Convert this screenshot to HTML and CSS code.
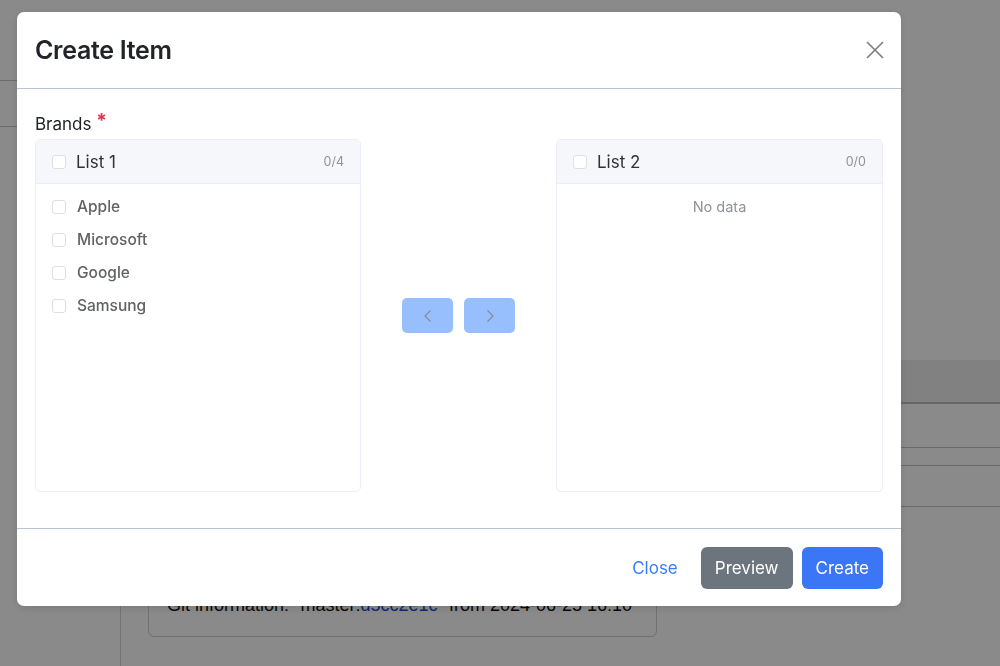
FILE: index.html
```html
<!DOCTYPE html>
<html lang="en">
<head>
  <meta charset="UTF-8" />
  <meta name="viewport" content="width=device-width, initial-scale=1.0"/>
  <title>Items – Create</title>
  <link rel="stylesheet" href="styles.css">
</head>
<body>

<div class="layout">
  <aside class="sidebar">
    <div class="sidebar-brand"></div>
    <div class="sidebar-item"></div>
    <nav class="sidebar-nav"></nav>
  </aside>

  <main class="content">
    <table class="data-table">
      <thead>
        <tr><th>&nbsp;</th></tr>
      </thead>
      <tbody>
        <tr class="row-a"><td>&nbsp;</td></tr>
        <tr class="row-b"><td></td></tr>
        <tr class="row-c"><td>&nbsp;</td></tr>
      </tbody>
    </table>

    <div class="git-info">
      Git information: "master:<a href="#">d5cc2e1c</a>" from 2024-06-25 16:10
    </div>
  </main>
</div>

<!-- Create item dialog -->
<div class="modal-backdrop">
  <div class="modal-dialog">
    <div class="modal-header">
      <h4 class="modal-title">Create Item</h4>
      <button class="btn-close" aria-label="Close">
        <svg width="18" height="18" viewBox="0 0 18 18">
          <path d="M1 1 L17 17 M17 1 L1 17" stroke="#7f7f7f" stroke-width="1.7" fill="none"/>
        </svg>
      </button>
    </div>

    <div class="modal-body">
      <label class="form-label">Brands <span class="required">*</span></label>

      <div class="transfer">
        <div class="transfer-panel">
          <div class="panel-header">
            <span class="checkbox"></span>
            <span class="panel-title">List 1</span>
            <span class="panel-count">0/4</span>
          </div>
          <div class="panel-list" id="sourceList">
            <!-- items added by script -->
          </div>
        </div>

        <div class="transfer-buttons">
          <button class="arrow-btn" disabled>
            <svg width="8" height="12" viewBox="0 0 8 12"><path d="M6.5 0.5 L1 6 L6.5 11.5" stroke="#858c97" stroke-width="1.2" fill="none"/></svg>
          </button>
          <button class="arrow-btn" disabled>
            <svg width="8" height="12" viewBox="0 0 8 12"><path d="M1.5 0.5 L7 6 L1.5 11.5" stroke="#858c97" stroke-width="1.2" fill="none"/></svg>
          </button>
        </div>

        <div class="transfer-panel">
          <div class="panel-header">
            <span class="checkbox"></span>
            <span class="panel-title">List 2</span>
            <span class="panel-count">0/0</span>
          </div>
          <div class="panel-list">
            <p class="panel-empty">No data</p>
          </div>
        </div>
      </div>
    </div>

    <div class="modal-footer">
      <button class="btn btn-link">Close</button>
      <button class="btn btn-secondary">Preview</button>
      <button class="btn btn-primary">Create</button>
    </div>
  </div>
</div>

<script>
  // Source list of the transfer
  const brands = ["Apple", "Microsoft", "Google", "Samsung"];
  const sourceList = document.getElementById("sourceList");
  brands.forEach(name => {
    const row = document.createElement("label");
    row.className = "panel-item";
    row.innerHTML = '<span class="checkbox"></span><span class="item-label"></span>';
    row.querySelector(".item-label").textContent = name;
    sourceList.appendChild(row);
  });
</script>

</body>
</html>
```

FILE: styles.css
```css
* {
  margin: 0;
  padding: 0;
  box-sizing: border-box;
}

html, body {
  font-family: Inter, 'Liberation Sans', Arial, sans-serif;
  background: #fff;
  color: #212529;
  height: 100%;
  overflow: hidden;
}

/* Page behind the dialog */
.layout {
  display: grid;
  grid-template-columns: 121px 1fr;
  height: 100%;
}

.sidebar {
  display: flex;
  flex-direction: column;
}

.sidebar-brand {
  height: 81px;
  border-bottom: 1px solid #c8c8c8;
}

.sidebar-item {
  height: 46px;
  border-bottom: 1px solid #c8c8c8;
}

.sidebar-nav {
  flex: 1;
  border-right: 1px solid #d6d6d6;
}

.content {
  padding: 360px 0 0 27px;
}

.data-table {
  width: 100%;
  border-collapse: collapse;
}

.data-table thead tr {
  height: 43px;
  background: #eee;
}

.data-table thead {
  border-bottom: 2px solid #bdbdbd;
}

.data-table td {
  border-bottom: 1px solid #c4c4c4;
}

.row-a { height: 44px; }
.row-b { height: 18px; }
.row-c { height: 41px; }

.git-info {
  width: 509px;
  margin-top: 40px;
  padding: 47px 18px 20px;
  border: 1px solid #d0d0d0;
  border-radius: 6px;
  font-family: 'Liberation Sans', Arial, sans-serif;
  font-size: 18px;
  white-space: nowrap;
  color: #111;
}

.git-info a {
  color: #1a4fd1;
  text-decoration: none;
}

/* Dialog */
.modal-backdrop {
  position: fixed;
  top: 0;
  left: 0;
  width: 100%;
  height: 100%;
  background: rgba(0, 0, 0, 0.46);
  padding: 12px 0 0 17px;
}

.modal-dialog {
  width: 884px;
  background: #fff;
  border-radius: 7px;
  box-shadow: 0 2px 8px rgba(0, 0, 0, 0.12);
}

.modal-header {
  height: 77px;
  display: flex;
  align-items: center;
  justify-content: space-between;
  padding: 0 17px 0 18px;
  border-bottom: 1px solid #bcc3cd;
}

.modal-title {
  font-size: 25px;
  font-weight: 600;
  color: #212529;
  letter-spacing: -0.3px;
}

.btn-close {
  width: 18px;
  height: 18px;
  border: none;
  background: none;
  cursor: pointer;
  display: flex;
}

.modal-body {
  padding: 23px 18px 36px;
}

.form-label {
  display: block;
  font-size: 17px;
  line-height: 24px;
  margin-bottom: 3px;
  color: #212529;
}

.required {
  color: #dc3545;
  font-size: 19px;
  font-weight: 700;
  position: relative;
  top: -3px;
}

/* Transfer */
.transfer {
  display: flex;
}

.transfer-panel {
  width: 326px;
  height: 353px;
  border: 1px solid #ebeef5;
  border-radius: 5px;
  overflow: hidden;
}

.transfer-panel:last-child {
  width: 327px;
}

.panel-header {
  height: 44px;
  display: flex;
  align-items: center;
  padding: 0 16px;
  background: #f5f7fa;
  border-bottom: 1px solid #ebeef5;
}

.panel-title {
  margin-left: 10px;
  font-size: 17px;
  color: #303133;
}

.panel-count {
  margin-left: auto;
  font-size: 12.5px;
  color: #909399;
}

.checkbox {
  width: 14px;
  height: 14px;
  border: 1px solid #dcdfe6;
  border-radius: 3px;
  background: #fff;
  flex-shrink: 0;
}

.panel-list {
  padding-top: 6px;
}

.panel-item {
  height: 33px;
  display: flex;
  align-items: center;
  padding: 0 16px;
  cursor: pointer;
}

.item-label {
  margin-left: 11px;
  font-size: 15.5px;
  font-weight: 500;
  color: #606266;
}

.panel-empty {
  height: 33px;
  line-height: 33px;
  text-align: center;
  font-size: 14.5px;
  color: #909399;
}

.transfer-buttons {
  flex: 1;
  display: flex;
  justify-content: center;
  align-items: center;
  gap: 11px;
}

.arrow-btn {
  width: 51px;
  height: 35px;
  border: none;
  border-radius: 5px;
  background: #97befd;
  display: flex;
  align-items: center;
  justify-content: center;
}

/* Footer */
.modal-footer {
  height: 78px;
  display: flex;
  align-items: center;
  justify-content: flex-end;
  gap: 9px;
  padding: 0 18px;
  border-top: 1px solid #bcc3cd;
}

.btn {
  height: 42px;
  padding: 0 14px;
  border: none;
  border-radius: 6px;
  font-family: inherit;
  font-size: 17px;
  cursor: pointer;
}

.btn-link {
  background: none;
  color: #3b7cf6;
}

.btn-secondary {
  background: #6c757d;
  color: #fff;
}

.btn-primary {
  background: #3b76f6;
  color: #fff;
}
```
